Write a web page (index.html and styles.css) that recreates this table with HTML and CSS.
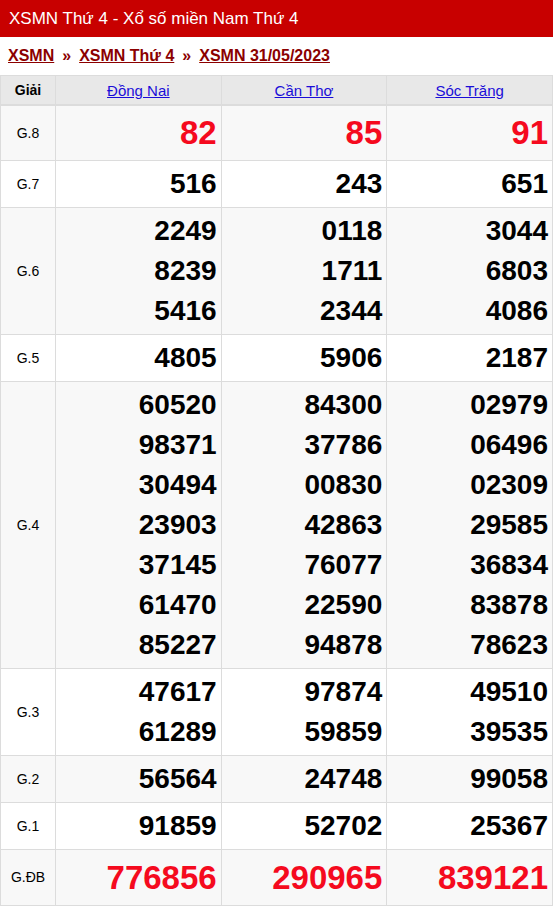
FILE: index.html
```html
<!DOCTYPE html>
<html lang="vi">
<head>
<meta charset="utf-8">
<title>XSMN Thứ 4</title>
<link rel="stylesheet" href="styles.css">
</head>
<body>
<h1 class="title">XSMN Thứ 4 - Xổ số miền Nam Thứ 4</h1>
<nav class="crumbs">
  <a href="#">XSMN</a><span class="sep">»</span><a href="#">XSMN Thứ 4</a><span class="sep">»</span><a href="#">XSMN 31/05/2023</a>
</nav>
<table class="kq">
  <colgroup><col class="c-label"><col><col><col></colgroup>
  <thead>
    <tr><th>Giải</th><th><a href="#">Đồng Nai</a></th><th><a href="#">Cần Thơ</a></th><th><a href="#">Sóc Trăng</a></th></tr>
  </thead>
  <tbody>
    <tr class="odd big"><td class="lbl">G.8</td><td><div>82</div></td><td><div>85</div></td><td><div>91</div></td></tr>
    <tr><td class="lbl">G.7</td><td><div>516</div></td><td><div>243</div></td><td><div>651</div></td></tr>
    <tr class="odd"><td class="lbl">G.6</td>
      <td><div>2249</div><div>8239</div><div>5416</div></td>
      <td><div>0118</div><div>1711</div><div>2344</div></td>
      <td><div>3044</div><div>6803</div><div>4086</div></td></tr>
    <tr><td class="lbl">G.5</td><td><div>4805</div></td><td><div>5906</div></td><td><div>2187</div></td></tr>
    <tr class="odd"><td class="lbl">G.4</td>
      <td><div>60520</div><div>98371</div><div>30494</div><div>23903</div><div>37145</div><div>61470</div><div>85227</div></td>
      <td><div>84300</div><div>37786</div><div>00830</div><div>42863</div><div>76077</div><div>22590</div><div>94878</div></td>
      <td><div>02979</div><div>06496</div><div>02309</div><div>29585</div><div>36834</div><div>83878</div><div>78623</div></td></tr>
    <tr><td class="lbl">G.3</td>
      <td><div>47617</div><div>61289</div></td>
      <td><div>97874</div><div>59859</div></td>
      <td><div>49510</div><div>39535</div></td></tr>
    <tr class="odd"><td class="lbl">G.2</td><td><div>56564</div></td><td><div>24748</div></td><td><div>99058</div></td></tr>
    <tr><td class="lbl">G.1</td><td><div>91859</div></td><td><div>52702</div></td><td><div>25367</div></td></tr>
    <tr class="odd big db"><td class="lbl">G.ĐB</td><td><div>776856</div></td><td><div>290965</div></td><td><div>839121</div></td></tr>
  </tbody>
</table>
</body>
</html>
```
FILE: styles.css
```css
html, body {
  margin: 0;
  padding: 0;
  background: #fff;
  font-family: "Liberation Sans", Arial, sans-serif;
  color: #000;
}
.title {
  margin: 0;
  height: 37px;
  line-height: 37px;
  background: #c80000;
  color: #fff;
  font-size: 17px;
  font-weight: normal;
  padding-left: 9px;
}
.crumbs {
  height: 38px;
  line-height: 38px;
  padding-left: 8px;
  font-size: 16px;
  font-weight: bold;
}
.crumbs a {
  color: #8b0000;
  text-decoration: underline;
}
.crumbs .sep {
  color: #8b0000;
  margin: 0 8px;
}
.kq {
  width: 553px;
  border-collapse: collapse;
  table-layout: fixed;
}
.kq .c-label { width: 55px; }
.kq th {
  background: #e8e8e8;
  height: 28px;
  border: 1px solid #dcdcdc;
  border-bottom-width: 2px;
  font-size: 14px;
  font-weight: bold;
  text-align: center;
  padding: 0;
}
.kq th a {
  color: #1a0dd8;
  text-decoration: underline;
  font-weight: normal;
  font-size: 15px;
}
.kq td {
  border: 1px solid #dcdcdc;
  padding: 3px 4px 3px 0;
  text-align: right;
  vertical-align: middle;
  font-size: 28px;
  font-weight: bold;
  line-height: 40px;
}
.kq td.lbl {
  text-align: center;
  font-size: 14px;
  font-weight: normal;
  padding: 0;
}
.kq tr.odd td { background: #f8f8f8; }
.kq tr.big td {
  color: #f50a1e;
  font-size: 33px;
  line-height: 48px;
}
.kq tr.db td { line-height: 49px; }
.kq tr.big td.lbl {
  color: #000;
  font-size: 14px;
}
```
